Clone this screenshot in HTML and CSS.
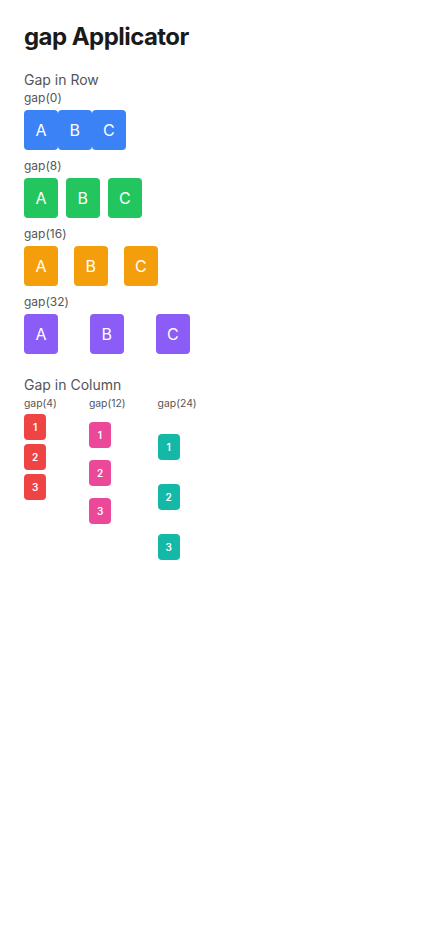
FILE: index.html
```html
<!DOCTYPE html>
<html>
<head>
<meta charset="utf-8">
<link rel="stylesheet" href="styles.css">
</head>
<body>
<div class="page">
  <h1 class="title">gap Applicator</h1>
  <section class="section">
    <h2 class="section-title">Gap in Row</h2>
    <div class="groups">
      <div class="group">
        <div class="label">gap(0)</div>
        <div class="row gap-0">
          <div class="box blue">A</div><div class="box blue">B</div><div class="box blue">C</div>
        </div>
      </div>
      <div class="group">
        <div class="label">gap(8)</div>
        <div class="row gap-8">
          <div class="box green">A</div><div class="box green">B</div><div class="box green">C</div>
        </div>
      </div>
      <div class="group">
        <div class="label">gap(16)</div>
        <div class="row gap-16">
          <div class="box amber">A</div><div class="box amber">B</div><div class="box amber">C</div>
        </div>
      </div>
      <div class="group">
        <div class="label">gap(32)</div>
        <div class="row gap-32">
          <div class="box purple">A</div><div class="box purple">B</div><div class="box purple">C</div>
        </div>
      </div>
    </div>
  </section>
  <section class="section col-section">
    <h2 class="section-title">Gap in Column</h2>
    <div class="columns">
      <div class="col cgap-4">
        <div class="small-label">gap(4)</div>
        <div class="chip red">1</div><div class="chip red">2</div><div class="chip red">3</div>
      </div>
      <div class="col cgap-12">
        <div class="small-label">gap(12)</div>
        <div class="chip pink">1</div><div class="chip pink">2</div><div class="chip pink">3</div>
      </div>
      <div class="col cgap-24">
        <div class="small-label">gap(24)</div>
        <div class="chip teal">1</div><div class="chip teal">2</div><div class="chip teal">3</div>
      </div>
    </div>
  </section>
</div>
</body>
</html>
```
FILE: styles.css
```css
html, body {
  margin: 0;
  padding: 0;
  background: #ffffff;
}
body {
  font-family: Inter, "Noto Sans", sans-serif;
  color: #1a1a1a;
}
.page {
  padding: 22px 24px;
  display: flex;
  flex-direction: column;
  align-items: flex-start;
}
.title {
  margin: 0;
  font-size: 24px;
  line-height: 29px;
  font-weight: 700;
  color: #1a1a1a;
  letter-spacing: -0.55px;
}
.section {
  margin-top: 20px;
  display: flex;
  flex-direction: column;
  align-items: flex-start;
  gap: 1px;
}
.col-section {
  margin-top: 22px;
  gap: 3px;
}
.section-title {
  margin: 0;
  font-size: 14px;
  line-height: 18px;
  font-weight: 400;
  color: #555555;
}
.groups {
  display: flex;
  flex-direction: column;
  gap: 8px;
}
.group {
  display: flex;
  flex-direction: column;
  align-items: flex-start;
  gap: 4px;
}
.label {
  font-size: 12px;
  line-height: 16px;
  color: #555555;
}
.row {
  display: flex;
  flex-direction: row;
}
.gap-0 { gap: 0; }
.gap-8 { gap: 8px; }
.gap-16 { gap: 16px; }
.gap-32 { gap: 32px; }
.box {
  padding: 12px 11.5px;
  font-size: 16px;
  line-height: 16px;
  color: #ffffff;
  border-radius: 4px;
  text-align: center;
}
.blue { background: #3b82f6; }
.green { background: #22c55e; }
.amber { background: #f59e0b; }
.purple { background: #8b5cf6; }
.columns {
  display: flex;
  flex-direction: row;
  gap: 32px;
  align-items: flex-start;
}
.col {
  display: flex;
  flex-direction: column;
  align-items: flex-start;
}
.cgap-4 { gap: 4px; }
.cgap-12 { gap: 12px; }
.cgap-24 { gap: 24px; }
.small-label {
  font-size: 10.4px;
  line-height: 13px;
  color: #555555;
}
.chip {
  padding: 8px;
  width: 6px;
  font-size: 10px;
  line-height: 10px;
  font-weight: 600;
  color: #ffffff;
  border-radius: 4px;
  text-align: center;
}
.red { background: #ef4444; }
.pink { background: #ec4899; }
.teal { background: #14b8a6; }
```
